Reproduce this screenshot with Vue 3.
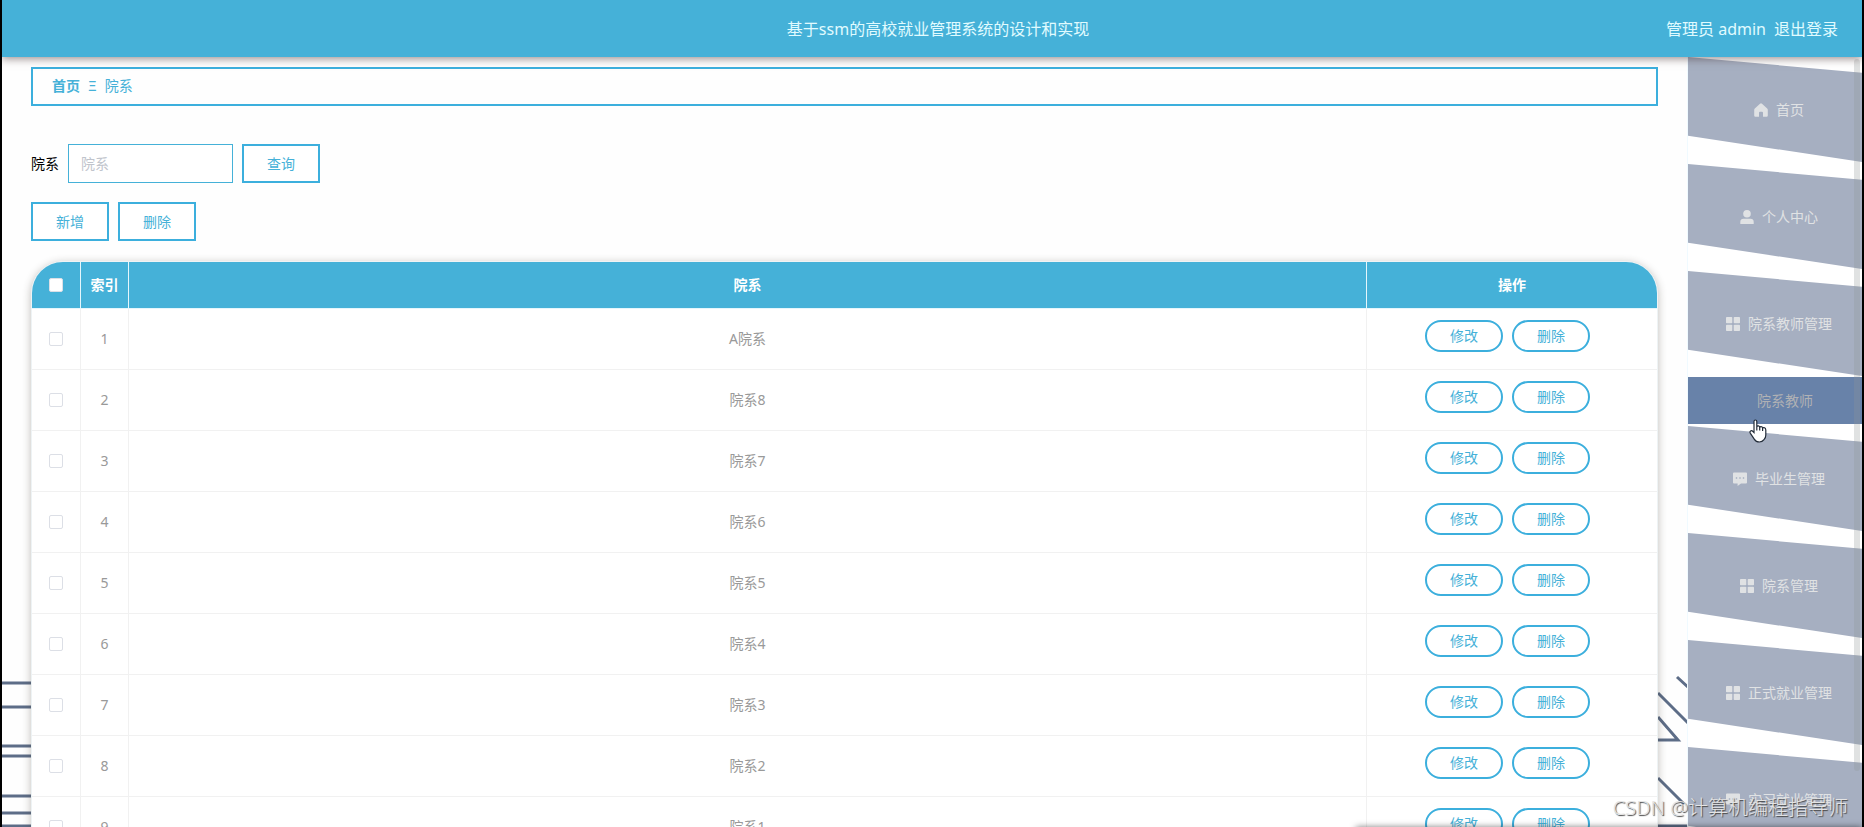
<script setup>
import { ref } from 'vue'

const keyword = ref('')
const rows = ['A院系', '院系8', '院系7', '院系6', '院系5', '院系4', '院系3', '院系2', '院系1']
const menu = [
  { label: '首页', icon: 'home' },
  { label: '个人中心', icon: 'user' },
  { label: '院系教师管理', icon: 'grid', child: '院系教师' },
  { label: '毕业生管理', icon: 'chat' },
  { label: '院系管理', icon: 'grid' },
  { label: '正式就业管理', icon: 'grid' },
  { label: '实习就业管理', icon: 'chat' }
]
</script>

<template>
  <div class="app">
    <svg class="deco deco-left" width="32" height="160" viewBox="0 0 32 160" aria-hidden="true">
      <path d="M0 16H32M0 40H32M0 79H32M0 89H32M0 129H32M0 146H32M0 159H32" />
    </svg>
    <svg class="deco deco-right" width="32" height="160" viewBox="0 0 32 160" aria-hidden="true">
      <path d="M19 10L32 22M0 26L32 58M0 50L20 73H0M0 111L26 137M0 159H32" />
    </svg>

    <header class="topbar">
      <h1>基于ssm的高校就业管理系统的设计和实现</h1>
      <div class="account">
        <span>管理员 admin</span>
        <a href="#">退出登录</a>
      </div>
    </header>

    <div class="body">
      <main class="content">
        <nav class="crumbs">
          <a href="#">首页</a><span class="sep">Ξ</span><span>院系</span>
        </nav>

        <form class="search" @submit.prevent>
          <label for="dept">院系</label>
          <input id="dept" v-model="keyword" type="text" placeholder="院系" />
          <button class="btn" type="submit">查询</button>
        </form>

        <div class="tools">
          <button class="btn" type="button">新增</button>
          <button class="btn" type="button">删除</button>
        </div>

        <table class="grid">
          <thead>
            <tr>
              <th class="c-check"><input type="checkbox" aria-label="全选" /></th>
              <th class="c-index">索引</th>
              <th>院系</th>
              <th class="c-ops">操作</th>
            </tr>
          </thead>
          <tbody>
            <tr v-for="(name, i) in rows" :key="name">
              <td><input type="checkbox" :aria-label="name" /></td>
              <td>{{ i + 1 }}</td>
              <td>{{ name }}</td>
              <td class="ops">
                <div class="pair">
                  <button class="btn pill" type="button">修改</button>
                  <button class="btn pill" type="button">删除</button>
                </div>
              </td>
            </tr>
          </tbody>
        </table>
      </main>

      <aside class="side">
        <ul>
          <li v-for="m in menu" :key="m.label">
            <a class="item" href="#">
              <svg width="14" height="14" viewBox="0 0 14 14" aria-hidden="true">
                <path v-if="m.icon === 'home'" d="M7 0.3Q7.5 0.3 8 0.8L13.2 5.4Q13.8 6 13.8 6.8V12.6Q13.8 13.8 12.6 13.8H9V9.8Q9 8.8 8 8.8H6Q5 8.8 5 9.8V13.8H1.4Q0.2 13.8 0.2 12.6V6.8Q0.2 6 0.8 5.4L6 0.8Q6.5 0.3 7 0.3Z" />
                <template v-else-if="m.icon === 'user'">
                  <circle cx="7" cy="3.8" r="3.8" />
                  <path d="M0.3 14V12Q0.3 8.8 3.6 8.8H10.4Q13.7 8.8 13.7 12V14Z" />
                </template>
                <template v-else-if="m.icon === 'grid'">
                  <rect width="6.3" height="6.3" rx="0.8" />
                  <rect x="7.7" width="6.3" height="6.3" rx="0.8" />
                  <rect y="7.7" width="6.3" height="6.3" rx="0.8" />
                  <rect x="7.7" y="7.7" width="6.3" height="6.3" rx="0.8" />
                </template>
                <path v-else fill-rule="evenodd" d="M1 0.5H13Q14 0.5 14 1.5V10.5Q14 11.5 13 11.5H8L4.6 14V11.5H1Q0 11.5 0 10.5V1.5Q0 0.5 1 0.5ZM2.8 5.3V6.7H4.2V5.3ZM6.3 5.3V6.7H7.7V5.3ZM9.8 5.3V6.7H11.2V5.3Z" />
              </svg>
              <span>{{ m.label }}</span>
            </a>
            <a v-if="m.child" class="sub" href="#">
              <span>{{ m.child }}</span>
              <svg class="hand" width="18" height="24" viewBox="0 0 18 24" aria-hidden="true">
                <path d="M5 13.6V2.6Q5 1 6.4 1Q7.8 1 7.8 2.6V7.8Q8.2 6.6 9.4 6.8Q10.7 7 10.7 8.4Q11.2 7.4 12.3 7.6Q13.6 7.8 13.6 9.2Q14.1 8.4 15.2 8.7Q16.8 9 16.8 11V16Q16.8 19 15 20.6Q13.2 23 10.4 23Q7 23 5.4 20.4L1.4 14.4Q0.4 12.8 1.6 12Q2.8 11.2 4 12.6ZM7.8 7.8V11.4M10.7 8.4V11.6M13.6 9.2V12" />
              </svg>
            </a>
          </li>
        </ul>
        <div class="thumb"></div>
      </aside>
    </div>

    <div class="popup-shade"></div>
    <div class="mark">CSDN @计算机编程指导师</div>
  </div>
</template>

<style>
body {
  background: #fff;
}
</style>

<style scoped>
.app {
  position: relative;
  box-sizing: border-box;
  height: 100vh;
  display: flex;
  flex-direction: column;
  overflow: hidden;
  border: solid #000;
  border-width: 0 2px;
  background: #fefefe;
  font: 14px/20px "Noto Sans", "Noto Sans CJK SC", sans-serif;
  color: #999;
}
a {
  color: inherit;
  text-decoration: none;
}
button,
input {
  box-sizing: border-box;
  margin: 0;
  font: inherit;
}
.topbar {
  position: relative;
  z-index: 2;
  flex: none;
  display: flex;
  align-items: center;
  justify-content: center;
  height: 57px;
  background: #45b1d8;
  box-shadow: 0 2px 8px rgba(60, 40, 40, 0.5);
  color: #e0fbff;
  font-size: 16px;
  line-height: 24px;
}
.topbar h1 {
  margin: 0;
  padding-left: 12px;
  font: inherit;
}
.account {
  position: absolute;
  right: 24px;
  display: flex;
  gap: 8px;
}
.body {
  flex: 1;
  min-height: 0;
  display: flex;
}
.content {
  position: relative;
  flex: 1;
  min-width: 0;
  padding: 10px 29px 0 29px;
}
.crumbs {
  box-sizing: border-box;
  display: flex;
  align-items: center;
  gap: 8px;
  height: 39px;
  padding: 0 19px 2px;
  border: 2px solid #3cafdd;
  color: #45b1d8;
}
.crumbs a {
  font-weight: 700;
}
.search {
  display: flex;
  align-items: center;
  margin-top: 38px;
  color: #000;
}
.search input {
  width: 165px;
  height: 39px;
  margin: 0 9px;
  padding: 0 12px;
  border: 1px solid #45b1d8;
  background: #fff;
  outline: none;
}
.search input::placeholder {
  color: #c0c4cc;
  opacity: 1;
}
.btn {
  width: 78px;
  height: 39px;
  padding: 0;
  border: 2px solid #3cafdd;
  background: #fff;
  color: #45b1d8;
  cursor: pointer;
}
.tools {
  display: flex;
  gap: 9px;
  margin: 19px 0 20px;
}
.grid {
  width: 100%;
  table-layout: fixed;
  border-collapse: separate;
  border-spacing: 0;
  border: 1px solid #eef3f5;
  border-radius: 32px 32px 0 0;
  overflow: hidden;
  background: #fff;
  box-shadow: 0 2px 8px rgba(60, 50, 40, 0.32);
  text-align: center;
}
th,
td {
  box-sizing: border-box;
  padding: 0;
  border: solid #f1f1f1;
  border-width: 0 1px 1px 0;
}
th:last-child,
td:last-child {
  border-right: 0;
}
th {
  height: 47px;
  border-color: #e4f6fc;
  background: #45b1d8;
  color: #fff;
}
td {
  height: 61px;
}
.c-check {
  width: 49px;
}
.c-index {
  width: 48px;
}
.c-ops {
  width: 290px;
}
.grid input {
  appearance: none;
  display: block;
  width: 14px;
  height: 14px;
  margin: 0 auto;
  border: 1px solid #dcdfe6;
  border-radius: 2px;
  background: #fff;
}
.ops {
  vertical-align: top;
}
.pair {
  display: flex;
  justify-content: center;
  gap: 9px;
  padding: 11px 9px 0 0;
}
.pill {
  height: 32px;
  border-radius: 16px;
}
.side {
  position: relative;
  flex: none;
  width: 174px;
  border-left: 1px solid #f0faff;
  background: #fff;
}
.side ul {
  margin: 0;
  padding: 0;
  list-style: none;
}
.side li {
  margin-bottom: 2px;
}
.item {
  box-sizing: border-box;
  display: flex;
  align-items: center;
  justify-content: center;
  gap: 8px;
  height: 105px;
  padding-left: 8px;
  background: #a6afc1;
  clip-path: polygon(0 0, 100% 15%, 100% 100%, 0 75%);
  color: #e0e2e4;
}
.item svg {
  fill: #e0e2e4;
}
.sub {
  position: relative;
  box-sizing: border-box;
  display: flex;
  align-items: center;
  justify-content: center;
  height: 47px;
  margin-top: 1px;
  padding-left: 20px;
  background: #6882a9;
  color: #b0b1b4;
}
.hand {
  position: absolute;
  top: 42px;
  left: 61px;
  z-index: 1;
  fill: #fff;
  stroke: #222b38;
  stroke-width: 1.2;
}
.thumb {
  position: absolute;
  top: 2px;
  right: 2px;
  width: 6px;
  height: 712px;
  border-radius: 3px;
  background: rgba(144, 150, 150, 0.28);
}
.deco {
  position: absolute;
  bottom: 0;
  fill: none;
  stroke: #5d6d87;
  stroke-width: 3;
}
.deco-left {
  left: 0;
}
.deco-right {
  right: 172px;
}
.popup-shade {
  position: absolute;
  right: 0;
  bottom: -10px;
  width: 506px;
  height: 10px;
  box-shadow: 0 0 6px rgba(0, 0, 0, 0.5);
}
.mark {
  position: absolute;
  right: 14px;
  bottom: 6px;
  color: #e4e4e4;
  font-size: 20px;
  font-weight: 300;
  line-height: 26px;
  text-shadow: 1px 1px 1px #444;
}
</style>
